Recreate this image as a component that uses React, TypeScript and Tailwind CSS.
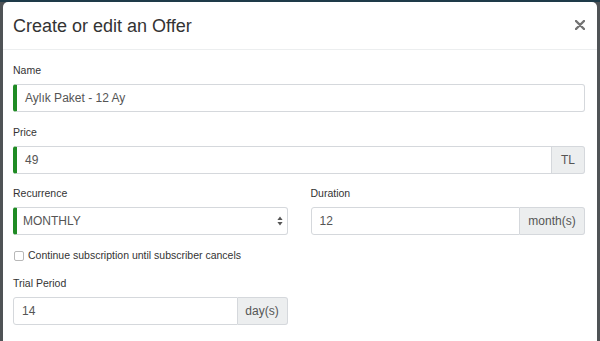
import React from "react";

const FONT = { fontFamily: '"Liberation Sans", Arial, sans-serif' };

function Label({ children }: { children: React.ReactNode }) {
  return <label className="block h-[14px] leading-[14px] mb-[7px] text-[10.5px] text-[#333]">{children}</label>;
}

function Field({
  value,
  addon,
  valid,
  addonW,
}: {
  value: string;
  addon?: string;
  valid?: boolean;
  addonW?: string;
}) {
  return (
    <div className="flex h-[28px]">
      <div
        className={
          "flex-1 flex items-center bg-white border border-[#d5d8dc] text-[12px] text-[#555] " +
          (valid ? "border-l-[4px] border-l-[#1f8b24] pl-[8px] " : "pl-[8px] ") +
          (addon ? "rounded-l-[3px]" : "rounded-[3px]")
        }
      >
        {value}
      </div>
      {addon && (
        <div
          className={
            "flex items-center justify-center bg-[#eceeef] border border-l-0 border-[#d5d8dc] rounded-r-[3px] text-[12px] text-[#555] " +
            (addonW ?? "")
          }
        >
          {addon}
        </div>
      )}
    </div>
  );
}

export default function App() {
  return (
    <div className="w-[600px] h-[341px] overflow-hidden bg-[#4f5356] border-t-2 border-[#1e3a48]" style={FONT}>
      <div className="mx-[3px] h-[400px] bg-white rounded-t-[5px]">
        <div className="h-[48px] flex items-center justify-between pl-[10px] pr-[12px] border-b border-[#eceeef]">
          <h4 className="text-[18px] text-[#333] leading-none">Create or edit an Offer</h4>
          <svg width="10" height="10" viewBox="0 0 10 10" className="mb-[2px]">
            <path d="M1 1L9 9M9 1L1 9" stroke="#737373" strokeWidth="2.4" strokeLinecap="round" />
          </svg>
        </div>

        <div className="pt-[13px] pl-[10px] pr-[12px]">
          <div className="mb-[13px]">
            <Label>Name</Label>
            <Field value="Aylık Paket - 12 Ay" valid />
          </div>

          <div className="mb-[12px]">
            <Label>Price</Label>
            <Field value="49" valid addon="TL" addonW="w-[33px]" />
          </div>

          <div className="grid grid-cols-2 gap-x-[23px] mb-[14px]">
            <div>
              <Label>Recurrence</Label>
              <div className="flex items-center justify-between h-[28px] bg-white border border-[#d5d8dc] border-l-[4px] border-l-[#1f8b24] rounded-[3px] pl-[6px] pr-[4px] text-[12px] text-[#555]">
                <span>MONTHLY</span>
                <svg width="6" height="10" viewBox="0 0 6 10">
                  <path d="M3 0.5L5.6 4H0.4Z M3 9.5L5.6 6H0.4Z" fill="#555" />
                </svg>
              </div>
            </div>
            <div>
              <Label>Duration</Label>
              <Field value="12" addon="month(s)" addonW="w-[65px]" />
            </div>
          </div>

          <div className="flex items-center h-[14px] mb-[13px]">
            <span className="w-[10px] h-[10px] ml-[1px] mr-[4px] rounded-[2px] border border-[#b8b8b8] bg-white" />
            <span className="text-[10.5px] text-[#333]">Continue subscription until subscriber cancels</span>
          </div>

          <div className="grid grid-cols-2 gap-x-[23px]">
            <div>
              <Label>Trial Period</Label>
              <Field value="14" addon="day(s)" addonW="w-[50px]" />
            </div>
          </div>
        </div>
      </div>
    </div>
  );
}
